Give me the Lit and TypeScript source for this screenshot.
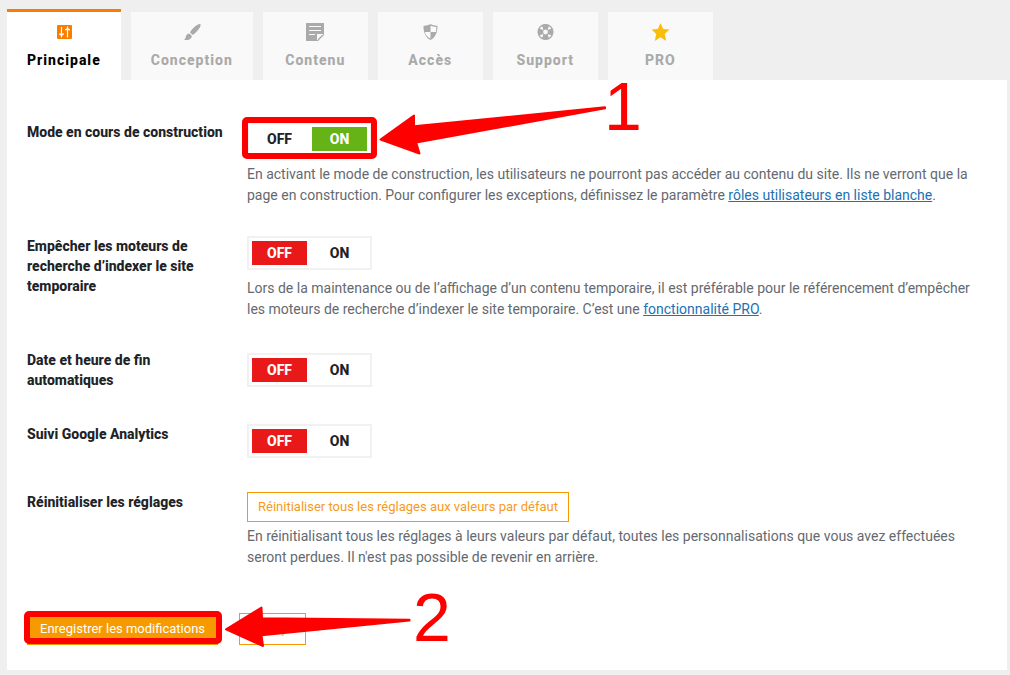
import { LitElement, html, svg, css, nothing, type TemplateResult } from "lit";
import { customElement, property, state } from "lit/decorators.js";
import { classMap } from "lit/directives/class-map.js";

const icons: Record<string, TemplateResult> = {
  sliders: svg`
    <rect x="3" y="3" width="15" height="14" rx="1" fill="currentColor"/>
    <path d="M7.500 5v10.500M13.500 15.500V4.500" stroke="#fff" stroke-width="1.200" fill="none"/>
    <path d="M5 11.500h5v1.300H8.800L7.500 15 6.200 12.800H5zM11 8.300V7h1.200l1.300-2.200L14.800 7H16v1.300z" fill="#fff"/>`,
  brush: svg`
    <path d="M18.400 2.200c.7.900-.2 3-2 5.300-1.900 2.500-4.400 4.800-5.800 5.400L8 10.500c.5-1.500 2.600-4 5-6 2.300-1.900 4.600-3.100 5.400-2.300z" fill="currentColor"/>
    <path d="M7.200 11.400l2.600 2.400c0 1.900-1 3.300-3 3.900-1.500.5-3.400.5-4.800-.2 1.300-.5 1.500-1.500 1.900-3 .4-1.800 1.500-3 3.300-3.100z" fill="currentColor"/>`,
  note: svg`
    <path d="M1 1h18v12L13 19H1z" fill="currentColor"/>
    <path d="M4 4.500h12M4 8.500h12M4 12.500h6" stroke="#f9f9f9" stroke-width="1.200" fill="none"/>
    <path d="M12 18V12h6v1h-1L13 17v1z" fill="#f9f9f9"/>`,
  shield: svg`
    <path fill-rule="evenodd" d="M10.500 2c2 1.300 4.500 1.800 7 1.700.2 6.300-2 11.800-7 14.300C5.500 15.500 3.300 10 3.500 3.700 6 3.800 8.500 3.300 10.500 2zm0 1.600C12.300 4.600 14.200 5 16.300 5c.1 1.800 0 3.400-.3 5h-5.500zM10.500 10v6.600C7.300 15.200 5.500 12.800 4.900 10z" fill="currentColor"/>`,
  buoy: svg`
    <circle cx="10.500" cy="10" r="7.400" fill="none" stroke="currentColor" stroke-width="1.300"/>
    <path d="M6.800 3.400Q10.500 1.300 14.200 3.400L12.500 7.400Q10.500 6.400 8.500 7.400zM6.800 16.600Q10.500 18.700 14.200 16.600L12.500 12.600Q10.500 13.600 8.500 12.600zM3.900 6.300Q1.800 10 3.900 13.700L7.900 12Q6.900 10 7.900 8zM17.100 6.300Q19.200 10 17.100 13.700L13.100 12Q14.100 10 13.100 8z" fill="currentColor"/>
    <circle cx="10.500" cy="10" r="3" fill="none" stroke="currentColor" stroke-width="1.200"/>`,
  star: svg`
    <path d="M10.500 1l2.700 6 6.300.6-4.700 4.300 1.400 7.100-5.700-3.700L4.800 19l1.400-7.100-4.700-4.300L7.800 7z" fill="currentColor"/>`,
};

const tabs = [
  { id: "main", label: "Principale", icon: "sliders" },
  { id: "design", label: "Conception", icon: "brush" },
  { id: "content", label: "Contenu", icon: "note" },
  { id: "access", label: "Accès", icon: "shield" },
  { id: "support", label: "Support", icon: "buoy" },
  { id: "pro", label: "PRO", icon: "star" },
];

@customElement("on-off-switch")
export class OnOffSwitch extends LitElement {
  @property() label = "";
  @property({ type: Boolean, reflect: true }) on = false;

  static styles = css`
    :host { display: block; }
    .switch {
      box-sizing: border-box;
      display: inline-flex;
      vertical-align: top;
      gap: 5px;
      margin: 0;
      padding: 3px;
      border: 2px solid #f1f1f1;
      background: #fff;
    }
    .option {
      width: 55px;
      font-size: 14px;
      font-weight: 800;
      line-height: 24px;
      text-align: center;
      color: #1d2327;
      cursor: pointer;
    }
    .radio {
      position: absolute;
      opacity: 0;
      width: 1px;
      height: 1px;
      margin: 0;
    }
    .option.off.active { background: #ea1919; color: #fff; }
    .option.on.active { background: #66b317; color: #fff; }
  `;

  render() {
    return html`
      <fieldset class="switch" aria-label=${this.label}>
        <label class=${classMap({ option: true, off: true, active: !this.on })}>
          <input class="radio" type="radio" name="value" .checked=${!this.on} @change=${() => (this.on = false)}>OFF
        </label>
        <label class=${classMap({ option: true, on: true, active: this.on })}>
          <input class="radio" type="radio" name="value" .checked=${this.on} @change=${() => (this.on = true)}>ON
        </label>
      </fieldset>`;
  }
}

@customElement("app-root")
export class AppRoot extends LitElement {
  @state() private tab = "main";

  static styles = css`
    :host {
      display: block;
      box-sizing: border-box;
      min-height: 100vh;
      padding: 9px 3px 5px 7px;
      background: #efefef;
      color: #1d2327;
      font-family: Roboto, "Liberation Sans", sans-serif;
      font-size: 14px;
    }
    .tabs { display: flex; align-items: flex-end; gap: 10px; }
    .tab {
      display: flex;
      flex-direction: column;
      align-items: center;
      gap: 8px;
      box-sizing: border-box;
      min-width: 105px;
      margin: 0;
      padding: 10px 20px;
      border: 0;
      background: #f9f9f9;
      color: #aaa;
      font: 800 14px/20px Roboto, "Liberation Sans", sans-serif;
      letter-spacing: 1px;
      cursor: pointer;
    }
    .tab.active { border-top: 3px solid #fa7d00; background: #fff; color: #000; }
    .icon { display: block; width: 20px; height: 20px; }
    .tab.active .icon { color: #fa7d00; }
    .icon.star { color: #f9be0b; }

    .panel { padding: 42px 20px 25px; background: #fff; }
    .rows { display: grid; gap: 30px; }
    .row { display: grid; grid-template-columns: 200px minmax(0, 1fr); column-gap: 20px; }
    .name { margin: 0; padding-bottom: 4px; font-size: 14px; font-weight: 800; line-height: 20px; }
    .value { align-self: center; }
    .control { position: relative; width: fit-content; padding-bottom: 4px; }
    .help { margin: 4px 0 0; line-height: 21px; color: #646970; }
    .help a { color: #2271b1; }
    .button {
      box-sizing: border-box;
      display: block;
      height: 30px;
      margin: 0;
      padding: 0 10px;
      border: 1px solid #f79a00;
      background: #fff;
      color: #f79a1c;
      font: 400 13px/28px Roboto, "Liberation Sans", sans-serif;
      cursor: pointer;
    }
    .actions { display: flex; gap: 21px; margin-top: 45px; }
    .actions .button { height: 32px; padding: 0 12px; line-height: 30px; }
    .actions .primary { background: #f79a00; color: #fff; }
    .save { position: relative; z-index: 1; }

    .callout { position: absolute; overflow: visible; pointer-events: none; fill: #f00; }
    .callout.first { left: -5px; top: -42px; }
    .callout.second { left: -3px; top: -23px; }
    .frame { fill: none; stroke: #f00; stroke-width: 6; }
    .arrow { stroke: #f00; stroke-width: 2; stroke-linejoin: round; }
    .step { font: 68px "Liberation Sans", Arial, sans-serif; }
  `;

  private row(name: string, on: boolean, help: unknown = nothing, callout: unknown = nothing) {
    return html`
      <div class="row">
        <h2 class="name">${name}</h2>
        <div class="value">
          <div class="control"><on-off-switch label=${name} ?on=${on}></on-off-switch>${callout}</div>
          ${help === nothing ? nothing : html`<p class="help">${help}</p>`}
        </div>
      </div>`;
  }

  render() {
    const first = html`
      <svg class="callout first" width="400" height="80" aria-hidden="true">
        <rect class="frame" x="3" y="40" width="129" height="36" rx="2"/>
        <path class="arrow" d="M138.500 59.600L172 35.500 172 46.300 363 27.300 363 28.300 174.200 62.500 177.500 73.500z"/>
        <text class="step" x="362" y="50">1</text>
      </svg>`;
    return html`
      <nav class="tabs" role="tablist">
        ${tabs.map(
          (t) => html`
            <button type="button" role="tab" aria-selected=${this.tab === t.id}
              class=${classMap({ tab: true, active: this.tab === t.id })}
              @click=${() => (this.tab = t.id)}>
              <svg class="icon ${t.icon}" viewBox="0 0 20 20" aria-hidden="true">${icons[t.icon]}</svg>
              <span>${t.label}</span>
            </button>`
        )}
      </nav>
      <form class="panel" @submit=${(e: Event) => e.preventDefault()}>
        <div class="rows">
          ${this.row(
            "Mode en cours de construction",
            true,
            html`En activant le mode de construction, les utilisateurs ne pourront pas accéder au contenu du site. Ils ne verront que la page en construction. Pour configurer les exceptions, définissez le paramètre <a href="#roles">rôles utilisateurs en liste blanche</a>.`,
            first
          )}
          ${this.row(
            "Empêcher les moteurs de recherche d’indexer le site temporaire",
            false,
            html`Lors de la maintenance ou de l’affichage d’un contenu temporaire, il est préférable pour le référencement d’empêcher les moteurs de recherche d’indexer le site temporaire. C’est une <a href="#pro">fonctionnalité PRO</a>.`
          )}
          ${this.row("Date et heure de fin automatiques", false)}
          ${this.row("Suivi Google Analytics", false)}
          <div class="row">
            <h2 class="name">Réinitialiser les réglages</h2>
            <div class="value">
              <button class="button" type="button">Réinitialiser tous les réglages aux valeurs par défaut</button>
              <p class="help">En réinitialisant tous les réglages à leurs valeurs par défaut, toutes les personnalisations que vous avez effectuées seront perdues. Il n'est pas possible de revenir en arrière.</p>
            </div>
          </div>
        </div>
        <div class="actions">
          <div class="save">
            <button class="button primary" type="submit">Enregistrer les modifications</button>
            <svg class="callout second" width="430" height="60" aria-hidden="true">
              <rect class="frame" x="3" y="24" width="192" height="27" rx="2"/>
              <path class="arrow" d="M202 39.300L237.500 17.500 238 28.300 385.500 29.700 385.500 30.500 237.500 45.200 239 56z"/>
              <text class="step" x="389" y="51">2</text>
            </svg>
          </div>
          <button class="button" type="button">Aperçu</button>
        </div>
      </form>`;
  }
}
